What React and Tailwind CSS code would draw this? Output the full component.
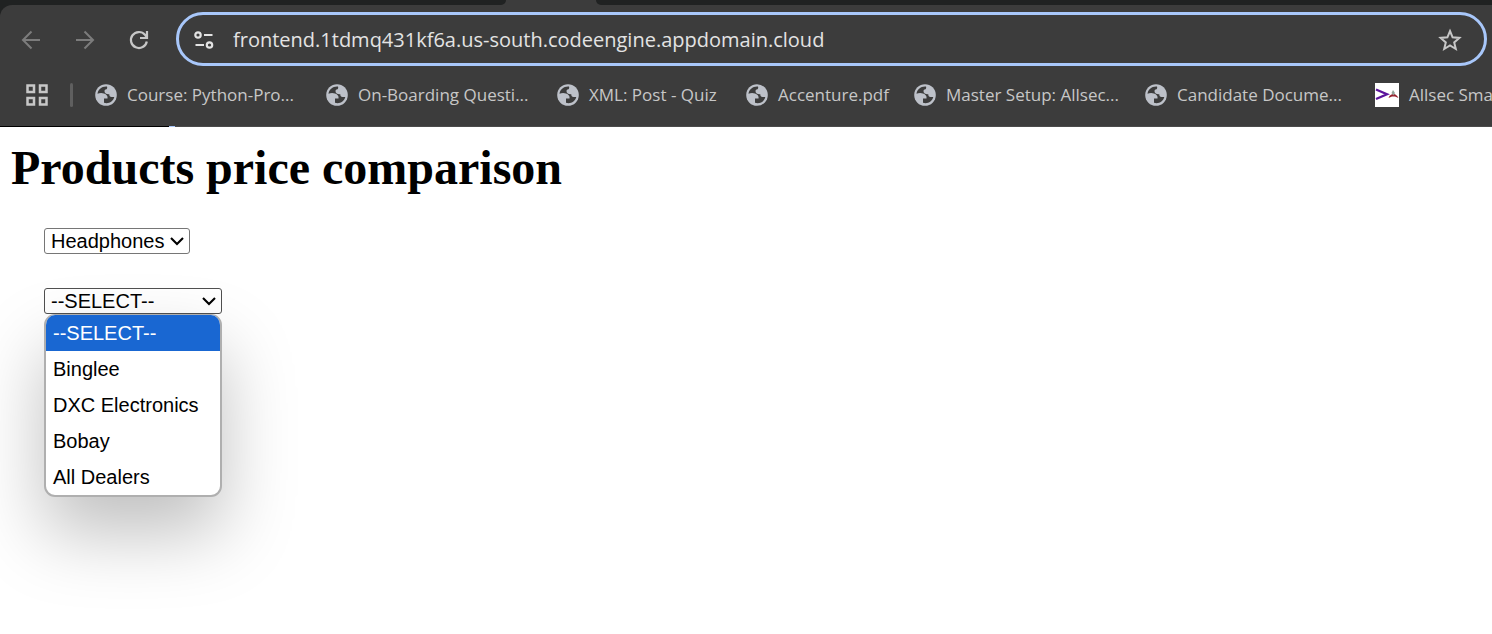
import React from "react";

const bookmarks = [
  { label: "Course: Python-Pro...", width: "w-[231px]" },
  { label: "On-Boarding Questi...", width: "w-[231px]" },
  { label: "XML: Post - Quiz", width: "w-[189px]" },
  { label: "Accenture.pdf", width: "w-[168px]" },
  { label: "Master Setup: Allsec...", width: "w-[231px]" },
  { label: "Candidate Docume...", width: "w-[230px]" },
  { label: "Allsec Sma", width: "w-auto", logo: true },
];

const dealers = ["--SELECT--", "Binglee", "DXC Electronics", "Bobay", "All Dealers"];

function Globe() {
  return (
    <svg className="size-[22px] shrink-0" viewBox="0 0 22 22" aria-hidden="true">
      <circle cx="11" cy="11" r="10.8" fill="#bdc1c9" />
      <path
        d="M12 2.500C7 2 2.800 5.500 2.500 9.800C4.500 8.800 7 8.700 9 9.500C11.500 10.400 13 12 12.500 14.500H9V18.800C13.500 20.300 18.300 17.500 19.300 13H16.500C15 13 14.300 12 14.300 10.300C11.500 10.500 9.500 9.300 9.500 7.300C9.500 6.200 10.200 5.300 11.500 5.300C12.200 4.500 12.400 3.300 12 2.500Z"
        fill="#3c3c3c"
      />
    </svg>
  );
}

function SiteLogo() {
  return (
    <svg className="size-6 shrink-0" viewBox="0 0 24 24" aria-hidden="true">
      <path d="M0 0H24V24H0Z" fill="#fff" />
      <path d="M1 6.500 12 11.300 1 16" fill="none" stroke="#5b139c" strokeWidth="2.300" />
      <path d="M13.500 15c1-3 3-4 5-4s4 2 5 4l-3.500-1.500h-3Z" fill="#96202c" />
      <path d="m16.500 10 1.500-3 2 3-1.500 2.500Z" fill="#91a49b" />
    </svg>
  );
}

function Chevron() {
  return (
    <svg className="pointer-events-none col-start-1 row-start-1 mr-[6px] h-[10px] w-[14px] self-center justify-self-end" viewBox="0 0 14 10" fill="none" stroke="#000" strokeWidth="2.1" aria-hidden="true">
      <path d="m1 2 6 6 6-6" />
    </svg>
  );
}

export default function App() {
  return (
    <div className="min-h-screen overflow-x-hidden bg-white font-['Liberation_Sans',Arial,sans-serif] text-black">
      <header className="overflow-hidden bg-[#202222] font-['Open_Sans',sans-serif]">
        <div className="flex h-[5px] bg-[#3c3c3c]">
          <div className="w-[506px] rounded-br-lg bg-[#202222]" />
          <div className="w-[90px]" />
          <div className="flex-1 rounded-bl-lg bg-[#202222]" />
        </div>
        <div className="rounded-tl-xl bg-[#3c3c3c] pt-[7px]">
          <div className="flex items-center pr-[5px]">
            <nav className="flex w-44 shrink-0 items-center gap-8 pt-[2px] pl-5" aria-label="Navigation">
              <button aria-label="Back" className="flex size-[22px] items-center justify-center">
                <svg className="size-[22px]" viewBox="0 0 22 22" fill="none" stroke="#7c7c7c" strokeWidth="2" aria-hidden="true"><path d="M20 11H3.500M11.500 2.500 3 11l8.500 8.500" /></svg>
              </button>
              <button aria-label="Forward" className="flex size-[22px] items-center justify-center">
                <svg className="size-[22px]" viewBox="0 0 22 22" fill="none" stroke="#7c7c7c" strokeWidth="2" aria-hidden="true"><path d="M2 11h16.500M10.500 2.500 19 11l-8.500 8.500" /></svg>
              </button>
              <button aria-label="Reload" className="flex size-[22px] items-center justify-center">
                <svg className="size-[22px]" viewBox="0 0 22 22" fill="none" stroke="#c7c7c7" strokeWidth="2.200" aria-hidden="true"><path d="M18.800 12.500A8 8 0 1 1 17 5.800L18.500 8M19 2v7h-7" /></svg>
              </button>
            </nav>
            <div className="flex h-[54px] min-w-0 flex-1 items-center rounded-full border-[3px] border-[#a8c7fa] pt-[2px] pr-[22px] pl-[14px]">
              <button aria-label="Site information" className="mr-[18px] flex size-[22px] shrink-0 items-center justify-center">
                <svg className="size-[22px]" viewBox="0 0 22 22" fill="none" stroke="#e3e3e3" strokeWidth="2.200" aria-hidden="true">
                  <circle cx="5" cy="6" r="2.700" /><path d="M11 6h8.500M2.500 16H11" /><circle cx="16.500" cy="16" r="2.700" />
                </svg>
              </button>
              <input aria-label="Address" defaultValue="frontend.1tdmq431kf6a.us-south.codeengine.appdomain.cloud" className="min-w-0 flex-1 bg-transparent text-[20px] leading-7 text-[#e3e3e3] outline-none" />
              <button aria-label="Bookmark this page" className="flex size-6 shrink-0 items-center justify-center">
                <svg className="size-6" viewBox="0 0 24 24" fill="none" stroke="#c7c7c7" strokeWidth="2" aria-hidden="true"><path d="m12 3 2.600 6.300 6.800.6-5.200 4.500 1.600 6.600-5.800-3.500L6.200 21l1.600-6.600-5.200-4.500 6.800-.6Z" /></svg>
              </button>
            </div>
          </div>
          <div className="flex h-[60px] items-center pb-[2px] pl-[26px]">
            <button aria-label="Apps" className="shrink-0">
              <svg className="size-[22px]" viewBox="0 0 22 22" fill="none" stroke="#c7c7c7" strokeWidth="2.500" aria-hidden="true"><path d="M1.500 1.500h6.500v6.500H1.500ZM14 1.500h6.500v6.500H14ZM1.500 14h6.500v6.500H1.500ZM14 14h6.500v6.500H14Z" /></svg>
            </button>
            <div className="mx-[22px] h-6 w-[3px] shrink-0 rounded-full bg-[#5f5f5f]" />
            <nav className="flex shrink-0" aria-label="Bookmarks">
              {bookmarks.map((b) => (
                <a key={b.label} href="#" className={`flex h-8 shrink-0 items-center gap-[10px] text-[17px] whitespace-nowrap text-[#c7c7c7] ${b.width}`}>
                  {b.logo ? <SiteLogo /> : <Globe />}
                  <span>{b.label}</span>
                </a>
              ))}
            </nav>
          </div>
          <div className="flex h-px bg-[#4b4b4b]">
            <div className="w-[169px] bg-black" />
            <div className="w-[6px] bg-[#a8c7fa]" />
          </div>
        </div>
      </header>
      <main className="px-[11px] pt-[14px]">
        <h1 className="font-['Liberation_Serif',serif] text-[48px] leading-[54px] font-bold">Products price comparison</h1>
        <form className="flex flex-col items-start gap-[34px] pt-[33px] pl-[33px] text-[20px] leading-6">
          <div className="grid w-[146px] items-center">
            <select aria-label="Product" className="col-start-1 row-start-1 h-[26px] w-full appearance-none rounded-[3px] border border-[#767676] bg-white pl-[6px]">
              <option>Headphones</option>
            </select>
            <Chevron />
          </div>
          <div className="relative w-[178px]">
            <div className="grid items-center">
              <select aria-label="Dealer" className="col-start-1 row-start-1 h-[26px] w-full appearance-none rounded-[3px] border border-[#505050] bg-white pl-[6px]">
                {dealers.map((d) => <option key={d}>{d}</option>)}
              </select>
              <Chevron />
            </div>
            <ul role="listbox" aria-label="Dealers" className="absolute top-full left-0 w-full overflow-hidden rounded-[11px] border-2 border-t border-[#afafaf] bg-white shadow-[0_36px_72px_rgba(0,0,0,0.25)]">
              {dealers.map((d, i) => (
                <li key={d} role="option" aria-selected={i === 0} className={`flex h-9 items-center px-[7px] ${i === 0 ? "bg-[#1967d2] text-white" : ""}`}>{d}</li>
              ))}
            </ul>
          </div>
        </form>
      </main>
    </div>
  );
}
